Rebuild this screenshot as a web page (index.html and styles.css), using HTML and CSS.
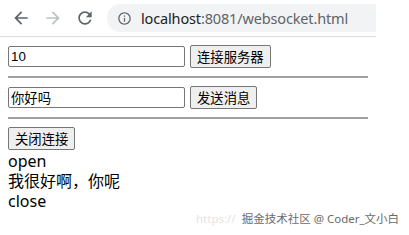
FILE: index.html
```html
<!DOCTYPE html>
<html lang="zh-CN">
  <head>
    <title>websocket</title>
    <link rel="stylesheet" href="styles.css">
  </head>
  <body>
    <div class="toolbar">
      <svg class="nav" viewBox="0 0 24 24"><path d="M20 11H7.83l5.59-5.59L12 4l-8 8 8 8 1.41-1.41L7.83 13H20v-2z"/></svg>
      <svg class="nav disabled" viewBox="0 0 24 24"><path d="M4 11h12.17l-5.59-5.59L12 4l8 8-8 8-1.41-1.41L16.17 13H4v-2z"/></svg>
      <svg class="nav" viewBox="0 0 24 24"><path d="M17.65 6.35C16.2 4.9 14.21 4 12 4c-4.42 0-7.99 3.58-7.99 8s3.57 8 7.99 8c3.73 0 6.84-2.55 7.73-6h-2.08c-.82 2.33-3.04 4-5.65 4-3.31 0-6-2.69-6-6s2.69-6 6-6c1.66 0 3.14.69 4.22 1.78L13 11h7V4l-2.35 2.35z"/></svg>
      <div class="omnibox">
        <svg class="info" viewBox="0 0 24 24"><path d="M11 7h2v2h-2zm0 4h2v6h-2zm1-9C6.48 2 2 6.48 2 12s4.48 10 10 10 10-4.48 10-10S17.52 2 12 2zm0 18c-4.41 0-8-3.59-8-8s3.59-8 8-8 8 3.59 8 8-3.59 8-8 8z"/></svg>
        <span class="host">localhost</span><span class="path">:8081/websocket.html</span>
      </div>
    </div>

    <div class="page">
      <div class="row">
        <input type="text" value="10">
        <button>连接服务器</button>
      </div>
      <hr>
      <div class="row">
        <input type="text" value="你好吗">
        <button>发送消息</button>
      </div>
      <hr>
      <div class="row">
        <button>关闭连接</button>
      </div>
      <div class="log">
        <div>open</div>
        <div>我很好啊，你呢</div>
        <div>close</div>
      </div>
    </div>

    <div class="watermark"><span class="url">https://</span>掘金技术社区 @ Coder_文小白</div>
  </body>
</html>
```

FILE: styles.css
```css
body {
  margin: 0;
  width: 376px;
  font-family: "Noto Sans", "Noto Sans CJK SC", sans-serif;
  color: #000;
}
.toolbar {
  height: 36px;
  display: flex;
  align-items: center;
  padding-left: 11px;
  border-bottom: 1px solid #dadce0;
}
.nav {
  width: 20px;
  height: 20px;
  fill: #5f6368;
  margin-right: 12px;
}
.nav.disabled {
  fill: #bdc1c6;
}
.omnibox {
  flex: 1;
  height: 28px;
  background-color: #f1f3f4;
  border-radius: 14px 0 0 14px;
  display: flex;
  align-items: center;
  padding-left: 10px;
  font-size: 14.5px;
  letter-spacing: -0.15px;
}
.info {
  width: 15px;
  height: 15px;
  fill: #5f6368;
  margin-right: 9px;
}
.host {
  color: #202124;
}
.path {
  color: #5f6368;
}
.page {
  padding: 8px;
}
.row {
  display: flex;
  align-items: center;
  gap: 5px;
}
input, button {
  font-family: "Liberation Sans", "Noto Sans CJK SC", sans-serif;
  font-size: 13.33px;
  box-sizing: border-box;
  margin: 0;
}
input {
  width: 177px;
  height: 21px;
  padding: 1px 2px;
  border: 1px solid #767676;
  border-radius: 2px;
}
button {
  height: 23px;
  padding: 0 6px;
  background-color: #efefef;
  border: 1px solid #767676;
  border-radius: 2px;
}
hr {
  margin: 8px 0;
  border: none;
  border-top: 2px solid #a0a0a0;
  height: 0;
}
.log {
  font-size: 16px;
  line-height: 20px;
  margin-top: 1px;
}
.watermark {
  position: absolute;
  left: 196px;
  top: 210px;
  font-size: 11.5px;
  color: #6a6a6a;
  white-space: nowrap;
  text-shadow: 0 0 2px #fff;
}
.url {
  color: #e4e4e4;
  margin-right: 6px;
}
```
